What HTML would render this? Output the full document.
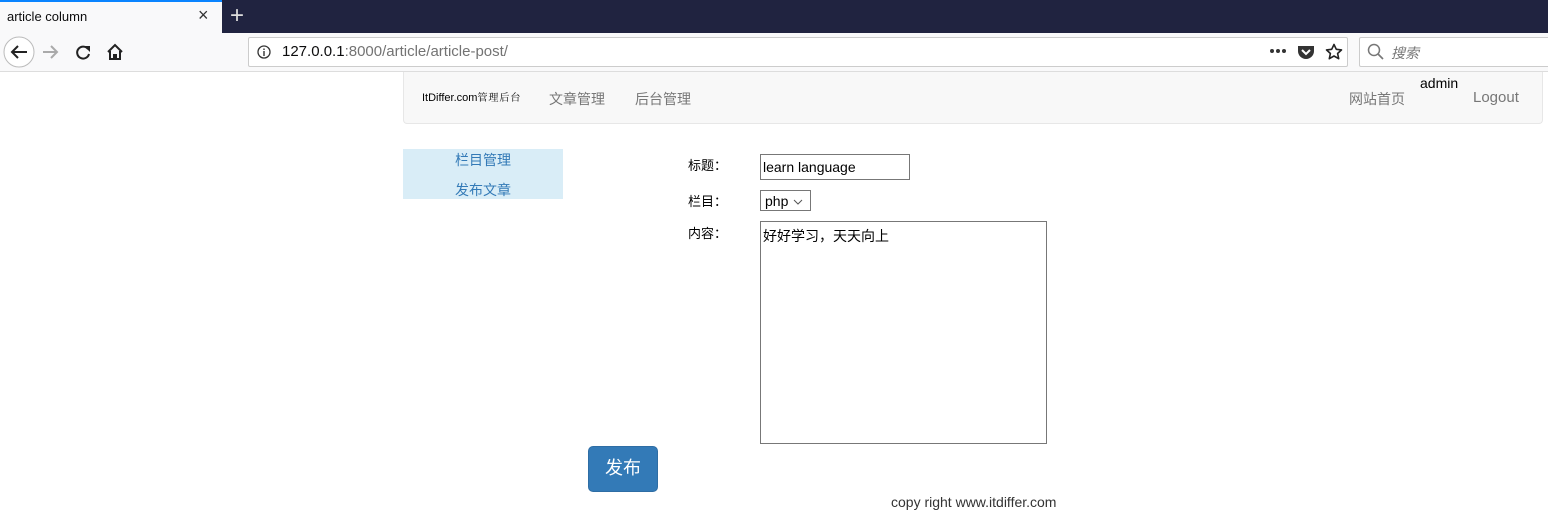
<!DOCTYPE html>
<html><head><meta charset="utf-8"><style>
*{box-sizing:border-box;margin:0;padding:0}
body{width:1548px;height:528px;position:relative;overflow:hidden;background:#fff;font-family:"Liberation Sans","Noto Sans CJK SC",sans-serif;font-size:14px;color:#333}
.a{position:absolute;white-space:nowrap}
</style></head><body>
<div class="a" style="left:0;top:0;width:1548px;height:33px;background:#202340"></div>
<div class="a" style="left:0;top:0;width:222px;height:33px;background:#f9f9fa"></div>
<div class="a" style="left:0;top:0;width:222px;height:2px;background:#0a84ff"></div>
<div class="a" style="left:7px;top:9px;font-size:13px;color:#0c0c0d">article column</div>
<div class="a" style="left:198px;top:5px;font-size:18px;color:#333">×</div>
<div class="a" style="left:230px;top:2px;font-size:24px;color:#ddd;font-weight:300">+</div>
<div class="a" style="left:0;top:33px;width:1548px;height:39px;background:#f9f9fa;border-bottom:1px solid #ddd"></div>
<svg class="a" style="left:3px;top:36px" width="32" height="32"><circle cx="16" cy="16" r="15" fill="#fff" stroke="#bbb"/><path d="M24 16H9M15 10l-6 6 6 6" stroke="#222" stroke-width="2" fill="none"/></svg>
<svg class="a" style="left:40px;top:43px" width="20" height="18"><path d="M3 9h14M11 3l6 6-6 6" stroke="#aaa" stroke-width="2" fill="none"/></svg>
<svg class="a" style="left:74px;top:43px" width="18" height="18"><path d="M14 6A6 6 0 1 0 15 11" stroke="#222" stroke-width="2" fill="none"/><path d="M10 3h6v6z" fill="#222"/></svg>
<svg class="a" style="left:106px;top:43px" width="18" height="18"><path d="M2 9L9 2l7 7M4 8v8h4v-4h2v4h4V8" stroke="#222" stroke-width="2" fill="none"/></svg>
<div class="a" style="left:248px;top:37px;width:1100px;height:30px;background:#fff;border:1px solid #ccc;border-radius:2px"></div>
<svg class="a" style="left:257px;top:45px" width="14" height="14"><circle cx="7" cy="7" r="6" fill="none" stroke="#333" stroke-width="1.3"/><path d="M7 6v5M7 3.5v1.5" stroke="#333" stroke-width="1.4"/></svg>
<div class="a" style="left:282px;top:43px;font-size:15px;color:#0c0c0d">127.0.0.1<span style="color:#737373">:8000/article/article-post/</span></div>
<svg class="a" style="left:1269px;top:48px" width="18" height="6"><circle cx="3" cy="3" r="2" fill="#333"/><circle cx="9" cy="3" r="2" fill="#333"/><circle cx="15" cy="3" r="2" fill="#333"/></svg>
<svg class="a" style="left:1297px;top:44px" width="18" height="16"><path d="M1 2h16v5a8 8 0 0 1-16 0z" fill="#333"/><path d="M5 6l4 4 4-4" stroke="#fff" stroke-width="2" fill="none"/></svg>
<svg class="a" style="left:1325px;top:43px" width="18" height="18"><path d="M9 1.5l2.3 4.8 5.2.6-3.9 3.6 1.1 5.2L9 13l-4.7 2.7 1.1-5.2L1.5 6.9l5.2-.6z" stroke="#222" stroke-width="1.6" fill="none" stroke-linejoin="round"/></svg>
<div class="a" style="left:1359px;top:37px;width:200px;height:30px;background:#fff;border:1px solid #ccc;border-radius:2px"></div>
<svg class="a" style="left:1367px;top:43px" width="18" height="18"><circle cx="7" cy="7" r="5.5" fill="none" stroke="#777" stroke-width="1.5"/><path d="M11 11l5 5" stroke="#777" stroke-width="1.7"/></svg>
<div class="a" style="left:1391px;top:43px;font-size:14px;color:#777;font-style:italic">搜索</div>

<div class="a" style="left:403px;top:72px;width:1140px;height:52px;background:#f8f8f8;border:1px solid #e7e7e7;border-top:none;border-radius:0 0 4px 4px"></div>
<div class="a" style="left:422px;top:89px;font-size:11px;color:#000">ItDiffer.com<span style="font-size:10px;font-family:'Noto Serif CJK SC',serif;letter-spacing:1px">管理后台</span></div>
<div class="a" style="left:549px;top:89px;color:#777">文章管理</div>
<div class="a" style="left:635px;top:89px;color:#777">后台管理</div>
<div class="a" style="left:1349px;top:89px;color:#777">网站首页</div>
<div class="a" style="left:1420px;top:75px;color:#000">admin</div>
<div class="a" style="left:1473px;top:89px;color:#777;font-size:15px">Logout</div>

<div class="a" style="left:403px;top:149px;width:160px;height:50px;background:#d9edf7"></div>
<div class="a" style="left:455px;top:150px;color:#337ab7">栏目管理</div>
<div class="a" style="left:455px;top:180px;color:#337ab7">发布文章</div>

<div class="a" style="left:688px;top:155px;font-size:13px;color:#000">标题：</div>
<div class="a" style="left:760px;top:154px;width:150px;height:26px;border:1px solid #777;padding:4px 2px;font-size:14px;color:#000">learn language</div>
<div class="a" style="left:688px;top:191px;font-size:13px;color:#000">栏目：</div>
<div class="a" style="left:760px;top:190px;width:51px;height:21px;border:1px solid #777;padding:2px 4px;font-size:14px;color:#000">php <svg width="10" height="8" style="margin-left:1px"><path d="M1 2l4 4 4-4" stroke="#555" fill="none"/></svg></div>
<div class="a" style="left:688px;top:223px;font-size:13px;color:#000">内容：</div>
<div class="a" style="left:760px;top:221px;width:287px;height:223px;border:1px solid #777;padding:4px 2px;font-size:14px;color:#000">好好学习，天天向上</div>

<div class="a" style="left:588px;top:446px;width:70px;height:46px;background:#337ab7;border:1px solid #2e6da4;border-radius:5px;color:#fff;font-size:18px;text-align:center;line-height:43px">发布</div>
<div class="a" style="left:891px;top:494px;font-size:14px;color:#333">copy right www.itdiffer.com</div>
</body></html>
